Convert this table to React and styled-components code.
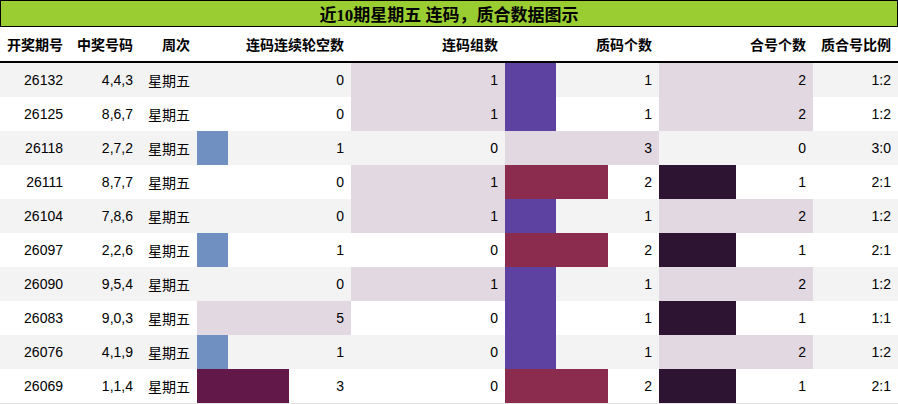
import React from "react";
import styled, { createGlobalStyle } from "styled-components";

const Global = createGlobalStyle`
  html, body { margin: 0; padding: 0; background: #fff; }
  body { font-family: "Liberation Sans", "Noto Sans CJK SC", sans-serif; }
`;

const COLS = "70px 70px 57px 154px 154px 154px 154px 85px";

const Page = styled.div`
  width: 898px;
  display: flex;
  flex-direction: column;
`;

const Title = styled.div`
  height: 27px;
  box-sizing: border-box;
  border: 1px solid #000;
  background: #9acd32;
  display: flex;
  align-items: center;
  justify-content: center;
  font-family: "Liberation Serif", "Noto Sans CJK SC", serif;
  font-weight: bold;
  font-size: 17px;
  color: #000;
`;

const HeaderRow = styled.div`
  display: grid;
  grid-template-columns: ${COLS};
  height: 36px;
  box-sizing: border-box;
  border-bottom: 2px solid #000;
  font-family: "Noto Sans CJK SC", sans-serif;
  font-weight: bold;
  font-size: 14px;
  color: #000;
`;

const HeadCell = styled.div`
  display: flex;
  align-items: center;
  justify-content: flex-end;
  padding-right: 7px;
`;

const Row = styled.div`
  display: grid;
  grid-template-columns: ${COLS};
  height: 34px;
  background: ${(p) => (p.$alt ? "#f3f3f3" : "#ffffff")};
  font-size: 14px;
  color: #000;
`;

const Cell = styled.div`
  display: flex;
  align-items: center;
  justify-content: flex-end;
  padding-right: 7px;
  font-family: ${(p) => (p.$cjk ? '"Noto Sans CJK SC", sans-serif' : '"Liberation Sans", "Noto Sans CJK SC", sans-serif')};
`;

const BarCell = styled.div`
  display: grid;
  grid-template: 1fr / 1fr;
  height: 34px;
`;

const Bar = styled.div`
  grid-area: 1 / 1;
  height: 100%;
  background: ${(p) => p.$color};
`;

const BarValue = styled.div`
  grid-area: 1 / 1;
  display: flex;
  align-items: center;
  justify-content: flex-end;
  padding-right: 7px;
  position: relative;
`;

const Body = styled.div`
  display: flex;
  flex-direction: column;
  border-bottom: 1px solid #e4e4e4;
`;

const headers = ["开奖期号", "中奖号码", "周次", "连码连续轮空数", "连码组数", "质码个数", "合号个数", "质合号比例"];

const rows = [
  ["26132", "4,4,3", 0, 1, 1, 2, "1:2"],
  ["26125", "8,6,7", 0, 1, 1, 2, "1:2"],
  ["26118", "2,7,2", 1, 0, 3, 0, "3:0"],
  ["26111", "8,7,7", 0, 1, 2, 1, "2:1"],
  ["26104", "7,8,6", 0, 1, 1, 2, "1:2"],
  ["26097", "2,2,6", 1, 0, 2, 1, "2:1"],
  ["26090", "9,5,4", 0, 1, 1, 2, "1:2"],
  ["26083", "9,0,3", 5, 0, 1, 1, "1:1"],
  ["26076", "4,1,9", 1, 0, 1, 2, "1:2"],
  ["26069", "1,1,4", 3, 0, 2, 1, "2:1"],
];

const LIGHT = "#e2d8e2";
const barSpecs = [
  { max: 5, colors: { 1: "#6f90c1", 3: "#62194a", 5: LIGHT } },
  { max: 1, colors: { 1: LIGHT } },
  { max: 3, colors: { 1: "#5e42a1", 2: "#8b2b4e", 3: LIGHT } },
  { max: 2, colors: { 1: "#2e1433", 2: LIGHT } },
];

function BarField({ value, spec }) {
  const w = (value / spec.max) * 154;
  return (
    <BarCell>
      {value > 0 && <Bar $color={spec.colors[value]} style={{ width: `${w}px` }} />}
      <BarValue>{value}</BarValue>
    </BarCell>
  );
}

export default function App() {
  return (
    <Page>
      <Global />
      <Title>近10期星期五 连码，质合数据图示</Title>
      <HeaderRow>
        {headers.map((h) => (
          <HeadCell key={h}>{h}</HeadCell>
        ))}
      </HeaderRow>
      <Body>
        {rows.map((r, i) => (
          <Row key={r[0]} $alt={i % 2 === 0}>
            <Cell>{r[0]}</Cell>
            <Cell>{r[1]}</Cell>
            <Cell $cjk>星期五</Cell>
            {barSpecs.map((s, j) => (
              <BarField key={j} value={r[2 + j]} spec={s} />
            ))}
            <Cell>{r[6]}</Cell>
          </Row>
        ))}
      </Body>
    </Page>
  );
}
